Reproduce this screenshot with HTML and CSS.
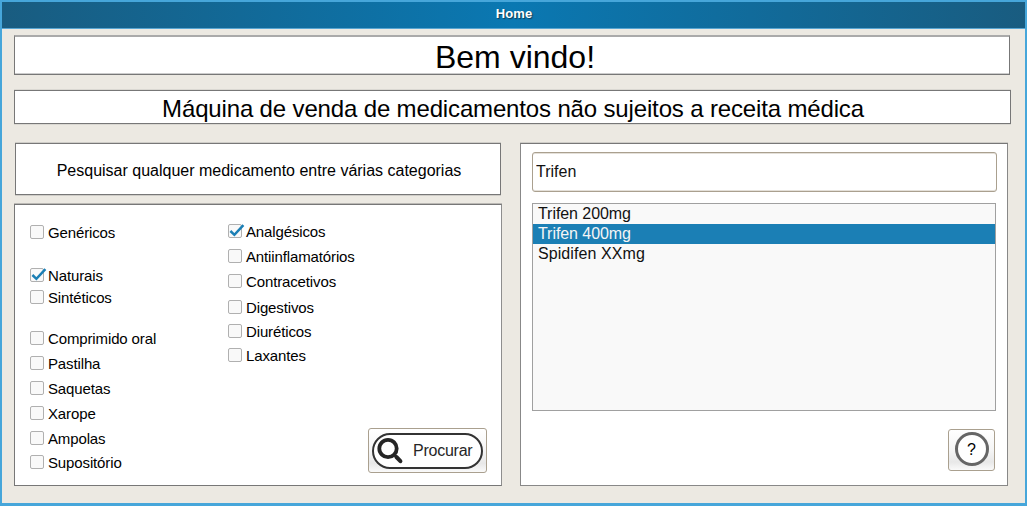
FILE: index.html
```html
<!DOCTYPE html>
<html lang="pt">
<head>
<meta charset="utf-8">
<title>Home</title>
<link rel="stylesheet" href="styles.css">
</head>
<body>
<div class="window">
  <header class="titlebar">Home</header>
  <main class="content">
    <h1 class="welcome">Bem vindo!</h1>
    <h2 class="subtitle">Máquina de venda de medicamentos não sujeitos a receita médica</h2>
    <div class="columns">
      <section class="left">
        <div class="caption">Pesquisar qualquer medicamento entre várias categorias</div>
        <div class="filters">
          <div class="options">
            <div class="opt"><span class="box"></span>Genéricos</div>
            <div class="opt gap-group"><span class="box"><svg class="tick" viewBox="0 0 18 16"><path d="M2.4 7 L6.4 10.8 L15.4 1.2"/></svg></span>Naturais</div>
            <div class="opt gap-tight"><span class="box"></span>Sintéticos</div>
            <div class="opt gap-types"><span class="box"></span>Comprimido oral</div>
            <div class="opt gap-row"><span class="box"></span>Pastilha</div>
            <div class="opt gap-row"><span class="box"></span>Saquetas</div>
            <div class="opt gap-row"><span class="box"></span>Xarope</div>
            <div class="opt gap-row"><span class="box"></span>Ampolas</div>
            <div class="opt gap-short"><span class="box"></span>Supositório</div>
          </div>
          <div class="side">
            <div class="options effects">
              <div class="opt"><span class="box"><svg class="tick" viewBox="0 0 18 16"><path d="M2.4 7 L6.4 10.8 L15.4 1.2"/></svg></span>Analgésicos</div>
              <div class="opt gap-row"><span class="box"></span>Antiinflamatórios</div>
              <div class="opt gap-row"><span class="box"></span>Contracetivos</div>
              <div class="opt gap-wide"><span class="box"></span>Digestivos</div>
              <div class="opt gap-short"><span class="box"></span>Diuréticos</div>
              <div class="opt gap-short"><span class="box"></span>Laxantes</div>
            </div>
            <button class="btn search">
              <span class="pill">
                <svg class="lens" viewBox="0 0 28 28"><circle cx="12" cy="11.5" r="8.7"/><path class="neck" d="M18 17.5 L21 20.5"/><path class="handle" d="M20.4 20 L24.4 24.2"/></svg>
                <span>Procurar</span>
              </span>
            </button>
          </div>
        </div>
      </section>
      <section class="right">
        <input class="query" type="text" value="Trifen">
        <ul class="results">
          <li>Trifen 200mg</li>
          <li class="selected">Trifen 400mg</li>
          <li class="spaced">Spidifen XXmg</li>
        </ul>
        <button class="btn help"><span class="ring">?</span></button>
      </section>
    </div>
  </main>
</div>
</body>
</html>
```
FILE: styles.css
```css
* { box-sizing: border-box; }

body {
  margin: 0;
  font-family: "Liberation Sans", Arial, sans-serif;
  color: #000;
}

.window {
  width: 1027px;
  height: 506px;
  border: 2px solid #46a6da;
  border-bottom-width: 3px;
  background: #ece9e2;
  overflow: hidden;
}

.titlebar {
  height: 27px;
  padding-left: 1px;
  border-bottom: 1px solid #58a5d2;
  background: linear-gradient(90deg, #195c80, #0a78b2 50%, #195c80);
  color: #fff;
  font-size: 13px;
  font-weight: bold;
  letter-spacing: 0.1px;
  line-height: 24px;
  text-align: center;
  text-shadow: 1px 1px 1px #123c55;
}

.content { padding: 6px 0 0 12px; }

.welcome, .subtitle {
  margin: 0;
  background: #fff;
  border: 1px solid #777;
  font-weight: normal;
  text-align: center;
}

.welcome {
  width: 996px;
  height: 40px;
  border-top: 2px solid #aaa;
  box-shadow: inset 0 -1px #ccc;
  font-size: 32px;
  line-height: 40px;
  padding-left: 6px;
}

.subtitle {
  width: 997px;
  height: 34px;
  margin-top: 15px;
  padding-left: 1px;
  box-shadow: 0 -1px #dad8d2, 0 1px #dad8d2;
  font-size: 24px;
  letter-spacing: -0.15px;
  line-height: 36px;
}

.columns {
  display: flex;
  gap: 19px;
  margin-top: 19px;
}

.left { width: 487px; }

.caption {
  width: 486px;
  height: 52px;
  margin-left: 1px;
  padding-left: 2px;
  border: 1px solid #777;
  box-shadow: 0 -1px #cfcdc8, 0 1px #cfcdc8;
  background: #fff;
  font-size: 16px;
  line-height: 54px;
  text-align: center;
}

.filters {
  display: flex;
  width: 488px;
  height: 282px;
  margin-top: 9px;
  padding: 0 14px 0 15px;
  border: 1px solid #777;
  border-right-color: #8e8e8e;
  box-shadow: 0 -1px #bbb9b5;
  background: #fff;
}

.options {
  width: 198px;
  padding-top: 20px;
  font-size: 15px;
  letter-spacing: -0.13px;
}
.effects { padding-top: 19px; }
.side { display: flex; flex-direction: column; flex: 1; }

.opt {
  display: flex;
  gap: 4px;
  height: 14px;
  line-height: 16px;
  white-space: nowrap;
}

.box {
  width: 14px;
  height: 14px;
  border: 1px solid #b0b0b0;
  border-radius: 2px;
  background: #f9f9f9;
}

.tick {
  display: block;
  width: 18px;
  height: 16px;
  margin: -1px 0 0 -1px;
}
.tick path { fill: none; stroke: #1b7fb5; stroke-width: 2.5; }

.gap-group { margin-top: 29px; }
.gap-tight { margin-top: 8px; }
.gap-types { margin-top: 27px; }
.gap-row { margin-top: 11px; }
.gap-wide { margin-top: 12px; }
.gap-short { margin-top: 10px; }

.btn {
  display: block;
  padding: 0;
  border: 1px solid #aaa08f;
  border-radius: 3px;
  background: linear-gradient(#fff, #f5f5f5 50%, #e8e8e8 80%, #fafafa);
  font-family: inherit;
  font-size: 16px;
  color: #262626;
}

.search {
  width: 119px;
  height: 45px;
  margin: auto 0 12px auto;
  letter-spacing: -0.25px;
}

.pill {
  display: flex;
  align-items: center;
  width: 111px;
  height: 36px;
  margin: 1px 0 0 3px;
  padding-left: 2px;
  gap: 9px;
  border: 2px solid #333;
  border-radius: 18px;
  background: #fff;
}

.lens { width: 28px; height: 28px; }
.lens * { fill: none; stroke: #252525; }
.lens circle { stroke-width: 3.8; }
.lens .neck { stroke-width: 2.5; }
.lens .handle { stroke-width: 4; stroke-linecap: round; }

.right {
  width: 488px;
  height: 343px;
  padding: 8px 11px;
  border: 1px solid #888;
  border-top-color: #777;
  box-shadow: 0 -1px #cfcdc8;
  background: #fff;
}

.query {
  display: block;
  width: 465px;
  height: 40px;
  padding: 0 3px 1px;
  border: 1px solid #aaa08f;
  border-radius: 3px;
  box-shadow: inset 0 1px #e4e0d9, inset 0 -1px #e4e0d9;
  background: #fff;
  font-family: inherit;
  font-size: 16px;
  color: #111;
  outline: none;
}

.results {
  width: 464px;
  height: 208px;
  margin: 11px 0 0;
  padding: 0;
  border: 1px solid #a0a0a0;
  background: #f9f9f9;
  list-style: none;
  font-size: 16px;
  line-height: 20px;
  color: #111;
}
.results li { height: 20px; padding-left: 5px; letter-spacing: -0.06px; }
.results .spaced { letter-spacing: 0.08px; }
.results .selected { background: #1b7fb5; color: #f5f5f5; }

.help {
  width: 47px;
  height: 42px;
  margin: 18px 0 0 416px;
}

.ring {
  display: block;
  width: 34px;
  height: 34px;
  margin: -2px auto 0;
  border: 3px solid #666;
  border-radius: 50%;
  background: #fff;
  color: #000;
  line-height: 30px;
}
```
